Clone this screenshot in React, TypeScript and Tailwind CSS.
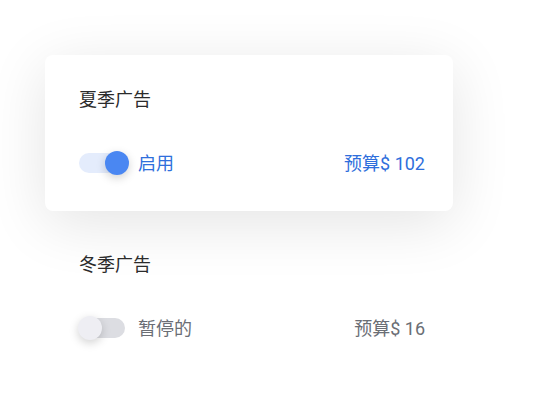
import { useState } from "react";

interface Campaign {
  name: string;
  budget: number;
  active: boolean;
}

const campaigns: Campaign[] = [
  { name: "夏季广告", budget: 102, active: true },
  { name: "冬季广告", budget: 16, active: false },
];

const Toggle = ({ on, onClick }: { on: boolean; onClick: () => void }) => (
  <button onClick={onClick} className="relative flex items-center w-[50px] h-[26px] shrink-0">
    <span className={`w-[46px] h-[20px] rounded-full ${on ? "bg-[#e4ecfc]" : "bg-[#dcdde2]"}`} />
    {on ? (
      <span className="absolute left-[26px] top-px w-[24px] h-[24px] rounded-full bg-[#4a87f2] shadow-[0_3px_10px_rgba(0,0,0,0.18)]" />
    ) : (
      <span className="absolute -left-px top-px w-[24px] h-[24px] rounded-full bg-[#eeeef3] shadow-[0_3px_10px_rgba(0,0,0,0.18)]" />
    )}
  </button>
);

const App = () => {
  const [items, setItems] = useState(campaigns);

  const toggle = (i: number) =>
    setItems(items.map((c, idx) => (idx === i ? { ...c, active: !c.active } : c)));

  return (
    <div
      className="w-[547px] h-[417px] bg-white pt-[55px] pl-[45px]"
      style={{ fontFamily: "Roboto, 'Noto Sans CJK SC', sans-serif" }}
    >
      <div className="flex flex-col gap-[9px] w-[408px]">
        {items.map((c, i) => (
          <div
            key={c.name}
            className={`h-[156px] pl-[34px] pr-[28px] pt-[33px] rounded-lg flex flex-col ${
              c.active ? "bg-white shadow-[0_12px_60px_rgba(0,0,0,0.11)]" : ""
            }`}
          >
            <div className="text-[18px] leading-6 text-[#2b2b2b]">{c.name}</div>
            <div className="flex items-center mt-[38px] h-[26px]">
              <Toggle on={c.active} onClick={() => toggle(i)} />
              <span className={`ml-[9px] text-[18px] ${c.active ? "text-[#2f6fdc]" : "text-[#6b6e75]"}`}>
                {c.active ? "启用" : "暂停的"}
              </span>
              <span className={`ml-auto text-[18px] ${c.active ? "text-[#2f6fdc]" : "text-[#6b6e75]"}`}>
                预算$ {c.budget}
              </span>
            </div>
          </div>
        ))}
      </div>
    </div>
  );
};

export default App;
